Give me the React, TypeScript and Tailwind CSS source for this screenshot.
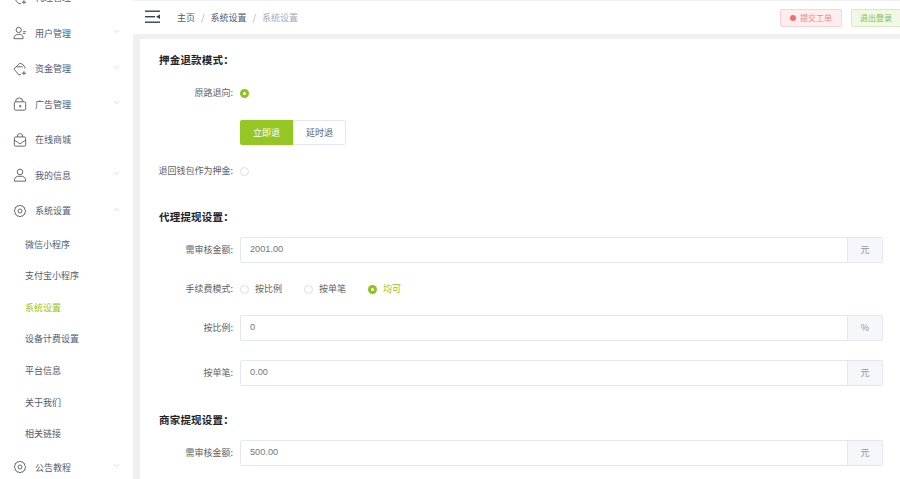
import React from "react";
import { ChevronDown, ChevronUp } from "lucide-react";

const font = { fontFamily: '"Noto Sans CJK SC", "Liberation Sans", sans-serif' };

const ic = { width: 14, height: 14, viewBox: "0 0 16 16", fill: "none", stroke: "#4b5563", strokeWidth: 1 };

const UserPlusIcon = () => (
  <svg {...ic}><circle cx="6.500" cy="4.500" r="3" /><path d="M1 14.500c0-3.500 2.500-5 5.500-5s4.500 1 5 3v2z" /><path d="M11.500 6.500h3.500M11.500 8.500h2.500" /></svg>
);
const WalletIcon = () => (
  <svg {...ic}><path d="M1 8 7.500 1.500 11 2.500l3 4-1 1M1 8l5.500 6.500H9M4 5.500h7" /><path d="M12.500 10.500v4.500M10 12.800h5" /></svg>
);
const AdIcon = () => (
  <svg {...ic}><rect x="1.500" y="5.500" width="13" height="9.500" rx="1.500" /><path d="M3 5.500 3.500 2.500l4-1.500 2.500 1 1.500 3.500" /><path d="M7 10.500h2.500M8.200 9v3" /></svg>
);
const ShopIcon = () => (
  <svg {...ic}><rect x="1.500" y="4.500" width="13" height="10.500" rx="1.500" /><path d="M5 4.500 5.500 2C6 1 7 .8 8 .8s2 .2 2.500 1.200l.5 2.500M1.500 8 8 12.500 14.500 8" /></svg>
);
const UserIcon = () => (
  <svg {...ic}><circle cx="8" cy="4.500" r="3.200" /><path d="M1.500 15c0-3 1-4.500 3.500-5.500h6c2.500 1 3.500 2.500 3.500 5.500z" /></svg>
);
const GearIcon = () => (
  <svg {...ic}><circle cx="8" cy="8" r="2.300" /><path d="M8 1.200 9.300 2.300 11 2l.7 1.600 1.700.7-.2 1.800L14.800 8l-1.300 1.800.2 1.700-1.700.8-.8 1.600-1.900-.2L8 14.800l-1.300-1.100-1.800.2-.7-1.600-1.700-.8.2-1.700L1.200 8l1.300-1.900-.2-1.800 1.700-.7L4.800 2l1.900.3z" /></svg>
);

function NavRow({ icon, label, arrow }: { icon: React.ReactNode; label: string; arrow?: "down" | "up" }) {
  return (
    <div className="flex h-[35.5px] items-center pl-[13px] pr-[12px] shrink-0">
      <span className="w-[22px] flex items-center shrink-0">{icon}</span>
      <span className="text-[9px] text-[#515a6e] flex-1 whitespace-nowrap">{label}</span>
      {arrow === "down" && <ChevronDown size={9} strokeWidth={1} className="text-[#9ca3af] -mt-[3px]" />}
      {arrow === "up" && <ChevronUp size={9} strokeWidth={1} className="text-[#9ca3af] -mt-[3px]" />}
    </div>
  );
}

function SubRow({ label, active }: { label: string; active?: boolean }) {
  return (
    <div className={`flex h-[31.6px] items-center pl-[25px] text-[9px] shrink-0 whitespace-nowrap ${active ? "text-[#94c624]" : "text-[#515a6e]"}`}>
      {label}
    </div>
  );
}

function Sidebar() {
  return (
    <aside className="w-[133px] h-[499px] bg-white shrink-0 flex flex-col -mt-[20px]">
      <NavRow icon={<WalletIcon />} label="代理管理" arrow="down" />
      <NavRow icon={<UserPlusIcon />} label="用户管理" arrow="down" />
      <NavRow icon={<WalletIcon />} label="资金管理" arrow="down" />
      <NavRow icon={<AdIcon />} label="广告管理" arrow="down" />
      <NavRow icon={<ShopIcon />} label="在线商城" />
      <NavRow icon={<UserIcon />} label="我的信息" arrow="down" />
      <NavRow icon={<GearIcon />} label="系统设置" arrow="up" />
      <SubRow label="微信小程序" />
      <SubRow label="支付宝小程序" />
      <SubRow label="系统设置" active />
      <SubRow label="设备计费设置" />
      <SubRow label="平台信息" />
      <SubRow label="关于我们" />
      <SubRow label="相关链接" />
      <NavRow icon={<GearIcon />} label="公告教程" arrow="down" />
    </aside>
  );
}

function Header() {
  return (
    <header className="h-[33px] mt-px bg-white flex items-center shrink-0">
      <svg width="16" height="14" viewBox="0 0 16 14" className="ml-[12px] -mt-px" fill="#374151">
        <rect x="0" y="0.500" width="15" height="1.400" />
        <rect x="0" y="6" width="10" height="1.400" />
        <rect x="0" y="11.500" width="15" height="1.400" />
        <path d="M11 6.700 15 4.500v4.500z" />
      </svg>
      <nav className="ml-[16px] text-[9px] flex items-center whitespace-nowrap">
        <span className="text-[#515a6e]">主页</span>
        <span className="text-[#a8abb2] mx-[6px]">/</span>
        <span className="text-[#515a6e]">系统设置</span>
        <span className="text-[#a8abb2] mx-[6px]">/</span>
        <span className="text-[#a3adbd]">系统设置</span>
      </nav>
      <div className="ml-auto flex items-center -mr-[1px]">
        <button className="w-[62px] h-[18px] rounded-[2px] bg-[#ffeeee] border border-[#ffd0d3] text-[#f7858b] text-[8px] flex items-center justify-center gap-[4px]">
          <span className="w-[6px] h-[6px] rounded-full bg-[#f56c6c]" />
          提交工单
        </button>
        <button className="ml-[9px] w-[50px] h-[18px] rounded-l-[2px] bg-[#f1f9e6] border border-[#d4ebbc] text-[#84bd45] text-[8px] flex items-center justify-center">
          退出登录
        </button>
      </div>
    </header>
  );
}

function Label({ children }: { children: React.ReactNode }) {
  return <label className="w-[93px] pr-[7px] text-right text-[9px] text-[#606266] whitespace-nowrap shrink-0">{children}</label>;
}

function Radio({ checked }: { checked?: boolean }) {
  return checked ? (
    <span className="w-[9px] h-[9px] rounded-full bg-[#8fc31f] flex items-center justify-center shrink-0">
      <span className="w-[3px] h-[3px] rounded-full bg-white" />
    </span>
  ) : (
    <span className="w-[9px] h-[9px] rounded-full border border-[#dcdfe6] bg-white shrink-0" />
  );
}

function InputRow({ label, value, unit }: { label: string; value: string; unit: string }) {
  return (
    <div className="flex items-center pl-[7px] pr-[17px]">
      <Label>{label}</Label>
      <div className="flex-1 h-[26px] flex border border-[#e4e7ed] rounded-[2px] bg-white">
        <div className="flex-1 flex items-center pl-[9px] text-[9.2px] text-[#70767f]" style={{ fontFamily: '"Liberation Sans", sans-serif' }}>{value}</div>
        <div className="w-[35px] bg-[#f5f7fa] border-l border-[#e4e7ed] flex items-center justify-center text-[9px] text-[#909399]">{unit}</div>
      </div>
    </div>
  );
}

function Title({ children, className }: { children: React.ReactNode; className?: string }) {
  return <h2 className={`pl-[19px] text-[10.5px] leading-[14px] font-bold text-[#1f2329] tracking-[0.2px] ${className ?? ""}`}>{children}</h2>;
}

function Content() {
  return (
    <div className="flex-1 ml-[7px] bg-white pt-[14px] overflow-hidden">
      <Title>押金退款模式：</Title>
      <div className="flex items-center h-[14px] mt-[19px] pl-[7px]">
        <Label>原路退向:</Label>
        <Radio checked />
      </div>
      <div className="flex mt-[20px] ml-[100px] w-[106px] h-[25px] text-[9px]">
        <div className="w-[53px] bg-[#94c624] text-white rounded-l-[2px] flex items-center justify-center">立即退</div>
        <div className="w-[53px] bg-white text-[#606266] border border-[#e4e7ed] rounded-r-[2px] flex items-center justify-center">延时退</div>
      </div>
      <div className="flex items-center h-[14px] mt-[19px] pl-[7px]">
        <Label>退回钱包作为押金:</Label>
        <Radio />
      </div>
      <Title className="mt-[32px]">代理提现设置：</Title>
      <div className="mt-[13px]">
        <InputRow label="需审核金额:" value="2001.00" unit="元" />
      </div>
      <div className="flex items-center h-[14px] mt-[19px] pl-[7px] text-[9px] text-[#606266]">
        <Label>手续费模式:</Label>
        <Radio />
        <span className="ml-[6px] mr-[22px]">按比例</span>
        <Radio />
        <span className="ml-[6px] mr-[22px]">按单笔</span>
        <Radio checked />
        <span className="ml-[6px] text-[#8fc31f]">均可</span>
      </div>
      <div className="mt-[19px]">
        <InputRow label="按比例:" value="0" unit="%" />
      </div>
      <div className="mt-[19px]">
        <InputRow label="按单笔:" value="0.00" unit="元" />
      </div>
      <Title className="mt-[27px]">商家提现设置：</Title>
      <div className="mt-[13px]">
        <InputRow label="需审核金额:" value="500.00" unit="元" />
      </div>
    </div>
  );
}

export default function App() {
  return (
    <div className="w-[900px] h-[479px] flex overflow-hidden bg-[#f0f0f0]" style={font}>
      <Sidebar />
      <main className="flex-1 flex flex-col min-w-0">
        <Header />
        <div className="h-[5px] shrink-0" />
        <Content />
      </main>
    </div>
  );
}
